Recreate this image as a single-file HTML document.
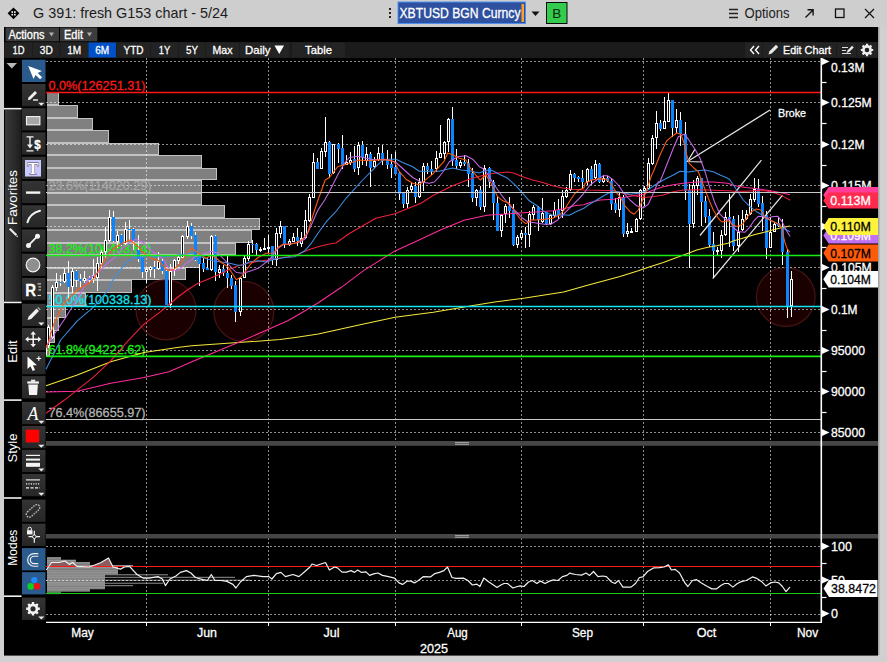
<!DOCTYPE html>
<html lang="en"><head><meta charset="utf-8"><title>G 391: fresh G153 chart</title>
<style>html,body{margin:0;padding:0;background:#000;overflow:hidden}svg{display:block}text{font-family:"Liberation Sans",sans-serif;white-space:pre}</style></head>
<body>
<svg width="887" height="662" viewBox="0 0 887 662">
<rect x="0" y="0" width="887" height="662" fill="#000" />
<rect x="0" y="0" width="887" height="27" fill="#cecece" />
<rect x="0" y="27" width="4" height="635" fill="#d0d0d0" />
<rect x="878" y="27" width="9" height="635" fill="#d0d0d0" />
<rect x="878" y="27" width="1.5" height="628" fill="#a4a4a4" />
<rect x="0" y="655.6" width="887" height="6.4" fill="#d0d0d0" />
<path d="M13.5 7.4L19.4 13.3L13.5 19.2L7.6 13.3z" fill="#000"/>
<rect x="11.4" y="11.2" width="1.7" height="1.7" fill="#e8e8e8" />
<rect x="11.4" y="13.8" width="1.7" height="1.7" fill="#e8e8e8" />
<rect x="14.0" y="11.2" width="1.7" height="1.7" fill="#e8e8e8" />
<rect x="14.0" y="13.8" width="1.7" height="1.7" fill="#e8e8e8" />
<text x="33" y="18" font-size="14.5" fill="#1c1c1c" textLength="195" lengthAdjust="spacingAndGlyphs">G 391: fresh G153 chart - 5/24</text>
<g fill="#222"><rect x="389" y="8" width="2" height="2"/><rect x="389" y="12" width="2" height="2"/><rect x="389" y="16" width="2" height="2"/></g>
<rect x="398" y="2" width="127.5" height="21.5" fill="#2f4f9f" stroke="#4d8ff0" stroke-width="1"/>
<text x="399.5" y="18" font-size="14.5" fill="#fff" textLength="121" lengthAdjust="spacingAndGlyphs" stroke="#fff" stroke-width="0.3">XBTUSD BGN Curncy</text>
<rect x="521.5" y="4" width="2.5" height="18" fill="#ffa020" />
<path d="M531.5 11.5h8l-4 4.5z" fill="#111"/>
<rect x="546.5" y="2.5" width="20.5" height="21" fill="#33cc4d" stroke="#0a0a0a" stroke-width="1"/>
<text x="556.7" y="18" font-size="13.5" fill="#0a2a10" text-anchor="middle">B</text>
<g stroke="#222" stroke-width="1.3"><path d="M729 9.5h9M729 13.5h9M729 17.5h9"/></g>
<text x="744.5" y="18" font-size="14.5" fill="#1c1c1c" textLength="45" lengthAdjust="spacingAndGlyphs">Options</text>
<path d="M805.5 17.5l7-7M807.5 9.8h5.6v5.6" stroke="#111" stroke-width="1.4" fill="none"/>
<rect x="835.5" y="9" width="8.5" height="8.5" stroke="#111" stroke-width="1.3" fill="none"/>
<path d="M865 9l9 9M874 9l-9 9" stroke="#111" stroke-width="1.2" fill="none"/>
<rect x="5.5" y="27.5" width="53.5" height="13.8" fill="#3c3c3c" />
<rect x="60" y="27.5" width="37.3" height="13.8" fill="#3c3c3c" />
<text x="8.5" y="38.5" font-size="12" fill="#fff" textLength="36" lengthAdjust="spacingAndGlyphs" stroke="#fff" stroke-width="0.3">Actions</text>
<path d="M49 32.5h5l-2.5 4z" fill="#b0b0b0"/>
<text x="64" y="38.5" font-size="12" fill="#fff" textLength="19" lengthAdjust="spacingAndGlyphs" stroke="#fff" stroke-width="0.3">Edit</text>
<path d="M87 32.5h5l-2.5 4z" fill="#b0b0b0"/>
<rect x="4" y="42" width="874" height="16" fill="#1b1b1b" />
<rect x="5" y="42.5" width="27" height="15" fill="#232323" />
<text x="18.5" y="54" font-size="11.5" fill="#fff" text-anchor="middle" textLength="12" lengthAdjust="spacingAndGlyphs" stroke="#fff" stroke-width="0.3">1D</text>
<rect x="33" y="42.5" width="26.5" height="15" fill="#232323" />
<text x="46.25" y="54" font-size="11.5" fill="#fff" text-anchor="middle" textLength="13" lengthAdjust="spacingAndGlyphs" stroke="#fff" stroke-width="0.3">3D</text>
<rect x="60.5" y="42.5" width="27.5" height="15" fill="#232323" />
<text x="74.25" y="54" font-size="11.5" fill="#fff" text-anchor="middle" textLength="14" lengthAdjust="spacingAndGlyphs" stroke="#fff" stroke-width="0.3">1M</text>
<rect x="88.5" y="42.5" width="27.5" height="15" fill="#0050c8" />
<text x="102.25" y="54" font-size="11.5" fill="#fff" text-anchor="middle" textLength="14" lengthAdjust="spacingAndGlyphs" stroke="#fff" stroke-width="0.3">6M</text>
<rect x="117" y="42.5" width="33" height="15" fill="#232323" />
<text x="133.5" y="54" font-size="11.5" fill="#fff" text-anchor="middle" textLength="20" lengthAdjust="spacingAndGlyphs" stroke="#fff" stroke-width="0.3">YTD</text>
<rect x="151" y="42.5" width="27" height="15" fill="#232323" />
<text x="164.5" y="54" font-size="11.5" fill="#fff" text-anchor="middle" textLength="11.5" lengthAdjust="spacingAndGlyphs" stroke="#fff" stroke-width="0.3">1Y</text>
<rect x="179" y="42.5" width="26" height="15" fill="#232323" />
<text x="192.0" y="54" font-size="11.5" fill="#fff" text-anchor="middle" textLength="12" lengthAdjust="spacingAndGlyphs" stroke="#fff" stroke-width="0.3">5Y</text>
<rect x="206" y="42.5" width="33" height="15" fill="#232323" />
<text x="222.5" y="54" font-size="11.5" fill="#fff" text-anchor="middle" textLength="20" lengthAdjust="spacingAndGlyphs" stroke="#fff" stroke-width="0.3">Max</text>
<rect x="240" y="42.5" width="49.5" height="15" fill="#232323" />
<text x="245" y="54" font-size="11.5" fill="#fff" textLength="25.5" lengthAdjust="spacingAndGlyphs" stroke="#fff" stroke-width="0.3">Daily</text>
<path d="M274.5 45.5h9.5l-4.75 8.5z" fill="#fff"/>
<rect x="292" y="42.5" width="53" height="15" fill="#232323" />
<text x="318.5" y="54" font-size="11.5" fill="#fff" text-anchor="middle" textLength="27" lengthAdjust="spacingAndGlyphs" stroke="#fff" stroke-width="0.3">Table</text>
<rect x="745" y="42.5" width="17" height="15" fill="#232323" />
<rect x="763" y="42.5" width="73" height="15" fill="#232323" />
<rect x="837" y="42.5" width="19" height="15" fill="#232323" />
<rect x="857" y="42.5" width="20" height="15" fill="#232323" />
<path d="M754 46l-3.5 4 3.5 4M759 46l-3.5 4 3.5 4" stroke="#fff" stroke-width="1.4" fill="none"/>
<path d="M768.5 54.5l1-3.2 6.5-6.5 2.2 2.2-6.5 6.5z" fill="#e8e8e8"/>
<text x="783" y="54" font-size="11.5" fill="#fff" textLength="48" lengthAdjust="spacingAndGlyphs" stroke="#fff" stroke-width="0.3">Edit Chart</text>
<g stroke="#ddd" stroke-width="1" fill="none"><path d="M842 47.5h6M842 50.5h4M842 53.5h9"/></g><path d="M846.5 53l1-2.6 4.6-4.6 1.6 1.6-4.6 4.6z" fill="#eee"/>
<g transform="translate(867,50)"><circle r="3.6" fill="none" stroke="#eee" stroke-width="2.6"/><g stroke="#eee" stroke-width="2.2"><path d="M0-6.2V-4M0 6.2V4M-6.2 0H-4M6.2 0H4M-4.4-4.4L-2.9-2.9M4.4 4.4L2.9 2.9M-4.4 4.4L-2.9 2.9M4.4-4.4L2.9-2.9"/></g></g>
<g id="volprofile">
<rect x="47" y="92" width="12" height="13" fill="#c2c2c2" />
<rect x="47" y="93" width="11" height="11" fill="#808080" />
<rect x="47" y="105" width="31" height="13" fill="#c2c2c2" />
<rect x="47" y="106" width="30" height="11" fill="#808080" />
<rect x="47" y="118" width="46" height="12" fill="#c2c2c2" />
<rect x="47" y="119" width="45" height="10" fill="#808080" />
<rect x="47" y="130" width="62" height="13" fill="#c2c2c2" />
<rect x="47" y="131" width="61" height="11" fill="#808080" />
<rect x="47" y="143" width="112" height="12" fill="#c2c2c2" />
<rect x="47" y="144" width="111" height="10" fill="#808080" />
<rect x="47" y="155" width="155" height="13" fill="#c2c2c2" />
<rect x="47" y="156" width="154" height="11" fill="#808080" />
<rect x="47" y="168" width="170" height="12" fill="#c2c2c2" />
<rect x="47" y="169" width="169" height="10" fill="#808080" />
<rect x="47" y="180" width="155" height="13" fill="#c2c2c2" />
<rect x="47" y="181" width="154" height="11" fill="#808080" />
<rect x="47" y="193" width="155" height="12" fill="#c2c2c2" />
<rect x="47" y="194" width="154" height="10" fill="#808080" />
<rect x="47" y="205" width="178" height="13" fill="#c2c2c2" />
<rect x="47" y="206" width="177" height="11" fill="#808080" />
<rect x="47" y="218" width="213" height="12" fill="#c2c2c2" />
<rect x="47" y="219" width="212" height="10" fill="#808080" />
<rect x="47" y="230" width="205" height="13" fill="#c2c2c2" />
<rect x="47" y="231" width="204" height="11" fill="#808080" />
<rect x="47" y="243" width="189" height="12" fill="#c2c2c2" />
<rect x="47" y="244" width="188" height="10" fill="#808080" />
<rect x="47" y="255" width="153" height="13" fill="#c2c2c2" />
<rect x="47" y="256" width="152" height="11" fill="#808080" />
<rect x="47" y="268" width="139" height="12" fill="#c2c2c2" />
<rect x="47" y="269" width="138" height="10" fill="#808080" />
<rect x="47" y="280" width="85" height="13" fill="#c2c2c2" />
<rect x="47" y="281" width="84" height="11" fill="#808080" />
<rect x="47" y="293" width="39" height="13" fill="#c2c2c2" />
<rect x="47" y="294" width="38" height="11" fill="#808080" />
<rect x="47" y="306" width="19" height="12" fill="#c2c2c2" />
<rect x="47" y="307" width="18" height="10" fill="#808080" />
<rect x="47" y="318" width="12" height="13" fill="#c2c2c2" />
<rect x="47" y="319" width="11" height="11" fill="#808080" />
<rect x="47" y="331" width="8" height="12" fill="#c2c2c2" />
<rect x="47" y="332" width="7" height="10" fill="#808080" />
<rect x="47" y="343" width="3" height="13" fill="#c2c2c2" />
<rect x="47" y="344" width="2" height="11" fill="#808080" />
</g>
<g fill="#1c0000" fill-opacity="0.92" stroke="#471414" stroke-width="1.2"><circle cx="166" cy="309.8" r="30"/><circle cx="243.8" cy="311.5" r="30"/><circle cx="785.8" cy="297" r="29.3"/></g>
<g id="grid" stroke="#fff" stroke-opacity="0.55" stroke-width="1" stroke-dasharray="2 2" shape-rendering="crispEdges">
<path d="M46 432.5H821"/>
<path d="M46 391.5H821"/>
<path d="M46 350.5H821"/>
<path d="M46 309.5H821"/>
<path d="M46 267.5H821"/>
<path d="M46 226.5H821"/>
<path d="M46 185.5H821"/>
<path d="M46 144.5H821"/>
<path d="M46 102.5H821"/>
<path d="M46 61.5H821"/>
<path d="M46 546.5H821"/>
<path d="M46 580.5H821"/>
<path d="M46 614.5H821"/>
<path d="M146.5 58V622"/>
<path d="M268.5 58V622"/>
<path d="M395.5 58V622"/>
<path d="M521.5 58V622"/>
<path d="M643.5 58V622"/>
<path d="M770.5 58V622"/>
</g>
<text x="48.5" y="89.9" font-size="13" fill="#ff1818" textLength="97" lengthAdjust="spacingAndGlyphs" stroke="#ff1818" stroke-width="0.3">0.0%(126251.31)</text>
<text x="48.5" y="189.9" font-size="13" fill="#a6a6a6" textLength="103" lengthAdjust="spacingAndGlyphs" stroke="#a6a6a6" stroke-width="0.3">23.6%(114020.29)</text>
<text x="48.5" y="252.9" font-size="13" fill="#14f014" textLength="103" lengthAdjust="spacingAndGlyphs" stroke="#14f014" stroke-width="0.3">38.2%(106453.64)</text>
<text x="48.5" y="303.9" font-size="13" fill="#10e4f0" textLength="103" lengthAdjust="spacingAndGlyphs" stroke="#10e4f0" stroke-width="0.3">50.0%(100338.13)</text>
<text x="48.5" y="353.7" font-size="13" fill="#14f014" textLength="97" lengthAdjust="spacingAndGlyphs" stroke="#14f014" stroke-width="0.3">61.8%(94222.62)</text>
<text x="48.5" y="416.9" font-size="13" fill="#b4b4b4" textLength="97" lengthAdjust="spacingAndGlyphs" stroke="#b4b4b4" stroke-width="0.3">76.4%(86655.97)</text>
<g id="candles" shape-rendering="crispEdges">
<path d="M48.5 325V327M48.5 346V348" stroke="#fff" stroke-width="1"/>
<rect x="47.5" y="327.5" width="2" height="18" fill="#000" stroke="#fff" stroke-width="1"/>
<path d="M52.5 285V287M52.5 338V339" stroke="#fff" stroke-width="1"/>
<rect x="51.5" y="287.5" width="2" height="50" fill="#000" stroke="#fff" stroke-width="1"/>
<path d="M56.5 273V282M56.5 288V291" stroke="#fff" stroke-width="1"/>
<rect x="55.5" y="282.5" width="2" height="5" fill="#000" stroke="#fff" stroke-width="1"/>
<path d="M60.5 275V286" stroke="#fff" stroke-width="1"/>
<rect x="59.0" y="282" width="3" height="1" fill="#0a84ff"/>
<path d="M64.5 268V273M64.5 282V283" stroke="#fff" stroke-width="1"/>
<rect x="63.5" y="273.5" width="2" height="8" fill="#000" stroke="#fff" stroke-width="1"/>
<path d="M68.5 261V299" stroke="#fff" stroke-width="1"/>
<rect x="67.0" y="273" width="3" height="14" fill="#0a84ff"/>
<path d="M72.5 268V271M72.5 287V293" stroke="#fff" stroke-width="1"/>
<rect x="71.5" y="271.5" width="2" height="15" fill="#000" stroke="#fff" stroke-width="1"/>
<path d="M76.5 270V287" stroke="#fff" stroke-width="1"/>
<rect x="75.0" y="271" width="3" height="9" fill="#0a84ff"/>
<path d="M80.5 274V288" stroke="#fff" stroke-width="1"/>
<rect x="79.0" y="279" width="3" height="2" fill="#0a84ff"/>
<path d="M84.5 271V278M84.5 281V283" stroke="#fff" stroke-width="1"/>
<rect x="83.5" y="278.5" width="2" height="2" fill="#000" stroke="#fff" stroke-width="1"/>
<path d="M89.5 276V283" stroke="#fff" stroke-width="1"/>
<rect x="88.0" y="278" width="3" height="2" fill="#0a84ff"/>
<path d="M93.5 259V275M93.5 279V283" stroke="#fff" stroke-width="1"/>
<rect x="92.5" y="275.5" width="2" height="3" fill="#000" stroke="#fff" stroke-width="1"/>
<path d="M97.5 257V263M97.5 278V291" stroke="#fff" stroke-width="1"/>
<rect x="96.5" y="263.5" width="2" height="14" fill="#000" stroke="#fff" stroke-width="1"/>
<path d="M101.5 250V252M101.5 264V268" stroke="#fff" stroke-width="1"/>
<rect x="100.5" y="252.5" width="2" height="11" fill="#000" stroke="#fff" stroke-width="1"/>
<path d="M105.5 227V240M105.5 252V259" stroke="#fff" stroke-width="1"/>
<rect x="104.5" y="240.5" width="2" height="11" fill="#000" stroke="#fff" stroke-width="1"/>
<path d="M109.5 210V217M109.5 241V242" stroke="#fff" stroke-width="1"/>
<rect x="108.5" y="217.5" width="2" height="23" fill="#000" stroke="#fff" stroke-width="1"/>
<path d="M113.5 211V242" stroke="#fff" stroke-width="1"/>
<rect x="112.0" y="217" width="3" height="24" fill="#0a84ff"/>
<path d="M117.5 231V235M117.5 242V248" stroke="#fff" stroke-width="1"/>
<rect x="116.5" y="235.5" width="2" height="6" fill="#000" stroke="#fff" stroke-width="1"/>
<path d="M121.5 234V246" stroke="#fff" stroke-width="1"/>
<rect x="120.0" y="235" width="3" height="10" fill="#0a84ff"/>
<path d="M125.5 222V229M125.5 244V245" stroke="#fff" stroke-width="1"/>
<rect x="124.5" y="229.5" width="2" height="14" fill="#000" stroke="#fff" stroke-width="1"/>
<path d="M129.5 220V241" stroke="#fff" stroke-width="1"/>
<rect x="128.0" y="229" width="3" height="1" fill="#0a84ff"/>
<path d="M133.5 228V250" stroke="#fff" stroke-width="1"/>
<rect x="132.0" y="229" width="3" height="12" fill="#0a84ff"/>
<path d="M138.5 235V262" stroke="#fff" stroke-width="1"/>
<rect x="137.0" y="250" width="3" height="9" fill="#0a84ff"/>
<path d="M142.5 256V278" stroke="#fff" stroke-width="1"/>
<rect x="141.0" y="257" width="3" height="15" fill="#0a84ff"/>
<path d="M146.5 267V269M146.5 272V283" stroke="#fff" stroke-width="1"/>
<rect x="145.5" y="269.5" width="2" height="2" fill="#000" stroke="#fff" stroke-width="1"/>
<path d="M150.5 266V267M150.5 270V277" stroke="#fff" stroke-width="1"/>
<rect x="149.5" y="267.5" width="2" height="2" fill="#000" stroke="#fff" stroke-width="1"/>
<path d="M154.5 261V278" stroke="#fff" stroke-width="1"/>
<rect x="153.0" y="267" width="3" height="2" fill="#0a84ff"/>
<path d="M158.5 252V261M158.5 269V270" stroke="#fff" stroke-width="1"/>
<rect x="157.5" y="261.5" width="2" height="7" fill="#000" stroke="#fff" stroke-width="1"/>
<path d="M162.5 258V274" stroke="#fff" stroke-width="1"/>
<rect x="161.0" y="261" width="3" height="10" fill="#0a84ff"/>
<path d="M166.5 270V305" stroke="#fff" stroke-width="1"/>
<rect x="165.0" y="271" width="3" height="34" fill="#0a84ff"/>
<path d="M170.5 264V271M170.5 305V308" stroke="#fff" stroke-width="1"/>
<rect x="169.5" y="271.5" width="2" height="33" fill="#000" stroke="#fff" stroke-width="1"/>
<path d="M174.5 259V260M174.5 270V276" stroke="#fff" stroke-width="1"/>
<rect x="173.5" y="260.5" width="2" height="9" fill="#000" stroke="#fff" stroke-width="1"/>
<path d="M178.5 256V257M178.5 261V264" stroke="#fff" stroke-width="1"/>
<rect x="177.5" y="257.5" width="2" height="3" fill="#000" stroke="#fff" stroke-width="1"/>
<path d="M182.5 235V236M182.5 258V258" stroke="#fff" stroke-width="1"/>
<rect x="181.5" y="236.5" width="2" height="21" fill="#000" stroke="#fff" stroke-width="1"/>
<path d="M187.5 221V226M187.5 237V239" stroke="#fff" stroke-width="1"/>
<rect x="186.5" y="226.5" width="2" height="10" fill="#000" stroke="#fff" stroke-width="1"/>
<path d="M191.5 223V239" stroke="#fff" stroke-width="1"/>
<rect x="190.0" y="226" width="3" height="10" fill="#0a84ff"/>
<path d="M195.5 232V261" stroke="#fff" stroke-width="1"/>
<rect x="194.0" y="235" width="3" height="25" fill="#0a84ff"/>
<path d="M199.5 255V286" stroke="#fff" stroke-width="1"/>
<rect x="198.0" y="256" width="3" height="8" fill="#0a84ff"/>
<path d="M203.5 258V272" stroke="#fff" stroke-width="1"/>
<rect x="202.0" y="263" width="3" height="6" fill="#0a84ff"/>
<path d="M207.5 257V270" stroke="#fff" stroke-width="1"/>
<rect x="206.0" y="268" width="3" height="2" fill="#0a84ff"/>
<path d="M211.5 235V236M211.5 270V271" stroke="#fff" stroke-width="1"/>
<rect x="210.5" y="236.5" width="2" height="33" fill="#000" stroke="#fff" stroke-width="1"/>
<path d="M215.5 235V281" stroke="#fff" stroke-width="1"/>
<rect x="214.0" y="236" width="3" height="36" fill="#0a84ff"/>
<path d="M219.5 265V269M219.5 273V278" stroke="#fff" stroke-width="1"/>
<rect x="218.5" y="269.5" width="2" height="3" fill="#000" stroke="#fff" stroke-width="1"/>
<path d="M223.5 265V276" stroke="#fff" stroke-width="1"/>
<rect x="222.0" y="269" width="3" height="4" fill="#0a84ff"/>
<path d="M227.5 256V288" stroke="#fff" stroke-width="1"/>
<rect x="226.0" y="273" width="3" height="5" fill="#0a84ff"/>
<path d="M231.5 275V289" stroke="#fff" stroke-width="1"/>
<rect x="230.0" y="278" width="3" height="8" fill="#0a84ff"/>
<path d="M235.5 281V322" stroke="#fff" stroke-width="1"/>
<rect x="234.0" y="285" width="3" height="27" fill="#0a84ff"/>
<path d="M240.5 277V278M240.5 312V316" stroke="#fff" stroke-width="1"/>
<rect x="239.5" y="278.5" width="2" height="33" fill="#000" stroke="#fff" stroke-width="1"/>
<path d="M244.5 256V258M244.5 278V278" stroke="#fff" stroke-width="1"/>
<rect x="243.5" y="258.5" width="2" height="19" fill="#000" stroke="#fff" stroke-width="1"/>
<path d="M248.5 241V244M248.5 259V261" stroke="#fff" stroke-width="1"/>
<rect x="247.5" y="244.5" width="2" height="14" fill="#000" stroke="#fff" stroke-width="1"/>
<path d="M252.5 240V253" stroke="#fff" stroke-width="1"/>
<rect x="251.0" y="244" width="3" height="1" fill="#0a84ff"/>
<path d="M256.5 243V255" stroke="#fff" stroke-width="1"/>
<rect x="255.0" y="244" width="3" height="6" fill="#0a84ff"/>
<path d="M260.5 247V249M260.5 250V252" stroke="#fff" stroke-width="1"/>
<rect x="259.5" y="249.5" width="2" height="0.5" fill="#000" stroke="#fff" stroke-width="1"/>
<path d="M264.5 238V248M264.5 250V250" stroke="#fff" stroke-width="1"/>
<rect x="263.5" y="248.5" width="2" height="1" fill="#000" stroke="#fff" stroke-width="1"/>
<path d="M268.5 235V247M268.5 248V253" stroke="#fff" stroke-width="1"/>
<rect x="267.5" y="247.5" width="2" height="0.5" fill="#000" stroke="#fff" stroke-width="1"/>
<path d="M272.5 246V265" stroke="#fff" stroke-width="1"/>
<rect x="271.0" y="246" width="3" height="14" fill="#0a84ff"/>
<path d="M276.5 228V233M276.5 260V266" stroke="#fff" stroke-width="1"/>
<rect x="275.5" y="233.5" width="2" height="26" fill="#000" stroke="#fff" stroke-width="1"/>
<path d="M280.5 221V226M280.5 234V238" stroke="#fff" stroke-width="1"/>
<rect x="279.5" y="226.5" width="2" height="7" fill="#000" stroke="#fff" stroke-width="1"/>
<path d="M284.5 226V248" stroke="#fff" stroke-width="1"/>
<rect x="283.0" y="226" width="3" height="18" fill="#0a84ff"/>
<path d="M289.5 239V241M289.5 245V246" stroke="#fff" stroke-width="1"/>
<rect x="288.5" y="241.5" width="2" height="3" fill="#000" stroke="#fff" stroke-width="1"/>
<path d="M293.5 233V237M293.5 242V242" stroke="#fff" stroke-width="1"/>
<rect x="292.5" y="237.5" width="2" height="4" fill="#000" stroke="#fff" stroke-width="1"/>
<path d="M297.5 228V246" stroke="#fff" stroke-width="1"/>
<rect x="296.0" y="237" width="3" height="4" fill="#0a84ff"/>
<path d="M301.5 232V238M301.5 244V247" stroke="#fff" stroke-width="1"/>
<rect x="300.5" y="238.5" width="2" height="5" fill="#000" stroke="#fff" stroke-width="1"/>
<path d="M305.5 210V220M305.5 238V239" stroke="#fff" stroke-width="1"/>
<rect x="304.5" y="220.5" width="2" height="17" fill="#000" stroke="#fff" stroke-width="1"/>
<path d="M309.5 194V197M309.5 221V222" stroke="#fff" stroke-width="1"/>
<rect x="308.5" y="197.5" width="2" height="23" fill="#000" stroke="#fff" stroke-width="1"/>
<path d="M313.5 153V162M313.5 198V198" stroke="#fff" stroke-width="1"/>
<rect x="312.5" y="162.5" width="2" height="35" fill="#000" stroke="#fff" stroke-width="1"/>
<path d="M317.5 158V169" stroke="#fff" stroke-width="1"/>
<rect x="316.0" y="162" width="3" height="7" fill="#0a84ff"/>
<path d="M321.5 148V151M321.5 169V169" stroke="#fff" stroke-width="1"/>
<rect x="320.5" y="151.5" width="2" height="17" fill="#000" stroke="#fff" stroke-width="1"/>
<path d="M325.5 117V142M325.5 152V157" stroke="#fff" stroke-width="1"/>
<rect x="324.5" y="142.5" width="2" height="9" fill="#000" stroke="#fff" stroke-width="1"/>
<path d="M329.5 141V178" stroke="#fff" stroke-width="1"/>
<rect x="328.0" y="142" width="3" height="32" fill="#0a84ff"/>
<path d="M333.5 144V144M333.5 173V174" stroke="#fff" stroke-width="1"/>
<rect x="332.5" y="144.5" width="2" height="28" fill="#000" stroke="#fff" stroke-width="1"/>
<path d="M338.5 143V163" stroke="#fff" stroke-width="1"/>
<rect x="337.0" y="144" width="3" height="5" fill="#0a84ff"/>
<path d="M342.5 135V169" stroke="#fff" stroke-width="1"/>
<rect x="341.0" y="148" width="3" height="18" fill="#0a84ff"/>
<path d="M346.5 155V162M346.5 165V165" stroke="#fff" stroke-width="1"/>
<rect x="345.5" y="162.5" width="2" height="2" fill="#000" stroke="#fff" stroke-width="1"/>
<path d="M350.5 152V160M350.5 163V165" stroke="#fff" stroke-width="1"/>
<rect x="349.5" y="160.5" width="2" height="2" fill="#000" stroke="#fff" stroke-width="1"/>
<path d="M354.5 146V172" stroke="#fff" stroke-width="1"/>
<rect x="353.0" y="159" width="3" height="10" fill="#0a84ff"/>
<path d="M358.5 142V145M358.5 168V175" stroke="#fff" stroke-width="1"/>
<rect x="357.5" y="145.5" width="2" height="22" fill="#000" stroke="#fff" stroke-width="1"/>
<path d="M362.5 141V165" stroke="#fff" stroke-width="1"/>
<rect x="361.0" y="145" width="3" height="12" fill="#0a84ff"/>
<path d="M366.5 147V154M366.5 161V166" stroke="#fff" stroke-width="1"/>
<rect x="365.5" y="154.5" width="2" height="6" fill="#000" stroke="#fff" stroke-width="1"/>
<path d="M370.5 152V187" stroke="#fff" stroke-width="1"/>
<rect x="369.0" y="154" width="3" height="14" fill="#0a84ff"/>
<path d="M374.5 157V161M374.5 167V168" stroke="#fff" stroke-width="1"/>
<rect x="373.5" y="161.5" width="2" height="5" fill="#000" stroke="#fff" stroke-width="1"/>
<path d="M378.5 147V153M378.5 160V161" stroke="#fff" stroke-width="1"/>
<rect x="377.5" y="153.5" width="2" height="6" fill="#000" stroke="#fff" stroke-width="1"/>
<path d="M382.5 145V165" stroke="#fff" stroke-width="1"/>
<rect x="381.0" y="153" width="3" height="8" fill="#0a84ff"/>
<path d="M387.5 150V169" stroke="#fff" stroke-width="1"/>
<rect x="386.0" y="160" width="3" height="5" fill="#0a84ff"/>
<path d="M391.5 154V178" stroke="#fff" stroke-width="1"/>
<rect x="390.0" y="164" width="3" height="4" fill="#0a84ff"/>
<path d="M395.5 152V174" stroke="#fff" stroke-width="1"/>
<rect x="394.0" y="167" width="3" height="7" fill="#0a84ff"/>
<path d="M399.5 172V200" stroke="#fff" stroke-width="1"/>
<rect x="398.0" y="173" width="3" height="21" fill="#0a84ff"/>
<path d="M403.5 192V208" stroke="#fff" stroke-width="1"/>
<rect x="402.0" y="193" width="3" height="11" fill="#0a84ff"/>
<path d="M407.5 187V190M407.5 204V208" stroke="#fff" stroke-width="1"/>
<rect x="406.5" y="190.5" width="2" height="13" fill="#000" stroke="#fff" stroke-width="1"/>
<path d="M411.5 183V186M411.5 190V192" stroke="#fff" stroke-width="1"/>
<rect x="410.5" y="186.5" width="2" height="3" fill="#000" stroke="#fff" stroke-width="1"/>
<path d="M415.5 182V203" stroke="#fff" stroke-width="1"/>
<rect x="414.0" y="186" width="3" height="11" fill="#0a84ff"/>
<path d="M419.5 178V182M419.5 197V198" stroke="#fff" stroke-width="1"/>
<rect x="418.5" y="182.5" width="2" height="14" fill="#000" stroke="#fff" stroke-width="1"/>
<path d="M423.5 163V166M423.5 183V191" stroke="#fff" stroke-width="1"/>
<rect x="422.5" y="166.5" width="2" height="16" fill="#000" stroke="#fff" stroke-width="1"/>
<path d="M427.5 163V174" stroke="#fff" stroke-width="1"/>
<rect x="426.0" y="166" width="3" height="4" fill="#0a84ff"/>
<path d="M431.5 161V175" stroke="#fff" stroke-width="1"/>
<rect x="430.0" y="169" width="3" height="2" fill="#0a84ff"/>
<path d="M436.5 151V158M436.5 169V172" stroke="#fff" stroke-width="1"/>
<rect x="435.5" y="158.5" width="2" height="10" fill="#000" stroke="#fff" stroke-width="1"/>
<path d="M440.5 125V153M440.5 158V158" stroke="#fff" stroke-width="1"/>
<rect x="439.5" y="153.5" width="2" height="4" fill="#000" stroke="#fff" stroke-width="1"/>
<path d="M444.5 141V142M444.5 154V159" stroke="#fff" stroke-width="1"/>
<rect x="443.5" y="142.5" width="2" height="11" fill="#000" stroke="#fff" stroke-width="1"/>
<path d="M448.5 118V119M448.5 142V152" stroke="#fff" stroke-width="1"/>
<rect x="447.5" y="119.5" width="2" height="22" fill="#000" stroke="#fff" stroke-width="1"/>
<path d="M452.5 107V166" stroke="#fff" stroke-width="1"/>
<rect x="451.0" y="119" width="3" height="42" fill="#0a84ff"/>
<path d="M456.5 149V169" stroke="#fff" stroke-width="1"/>
<rect x="455.0" y="160" width="3" height="6" fill="#0a84ff"/>
<path d="M460.5 160V162M460.5 166V168" stroke="#fff" stroke-width="1"/>
<rect x="459.5" y="162.5" width="2" height="3" fill="#000" stroke="#fff" stroke-width="1"/>
<path d="M464.5 155V166" stroke="#fff" stroke-width="1"/>
<rect x="463.0" y="162" width="3" height="2" fill="#0a84ff"/>
<path d="M468.5 159V187" stroke="#fff" stroke-width="1"/>
<rect x="467.0" y="163" width="3" height="11" fill="#0a84ff"/>
<path d="M472.5 168V202" stroke="#fff" stroke-width="1"/>
<rect x="471.0" y="173" width="3" height="25" fill="#0a84ff"/>
<path d="M476.5 189V190M476.5 198V206" stroke="#fff" stroke-width="1"/>
<rect x="475.5" y="190.5" width="2" height="7" fill="#000" stroke="#fff" stroke-width="1"/>
<path d="M480.5 186V210" stroke="#fff" stroke-width="1"/>
<rect x="479.0" y="190" width="3" height="17" fill="#0a84ff"/>
<path d="M484.5 165V168M484.5 207V212" stroke="#fff" stroke-width="1"/>
<rect x="483.5" y="168.5" width="2" height="38" fill="#000" stroke="#fff" stroke-width="1"/>
<path d="M489.5 167V188" stroke="#fff" stroke-width="1"/>
<rect x="488.0" y="168" width="3" height="14" fill="#0a84ff"/>
<path d="M493.5 180V220" stroke="#fff" stroke-width="1"/>
<rect x="492.0" y="182" width="3" height="21" fill="#0a84ff"/>
<path d="M497.5 196V231" stroke="#fff" stroke-width="1"/>
<rect x="496.0" y="203" width="3" height="28" fill="#0a84ff"/>
<path d="M501.5 214V215M501.5 231V237" stroke="#fff" stroke-width="1"/>
<rect x="500.5" y="215.5" width="2" height="15" fill="#000" stroke="#fff" stroke-width="1"/>
<path d="M505.5 204V206M505.5 214V223" stroke="#fff" stroke-width="1"/>
<rect x="504.5" y="206.5" width="2" height="7" fill="#000" stroke="#fff" stroke-width="1"/>
<path d="M509.5 197V218" stroke="#fff" stroke-width="1"/>
<rect x="508.0" y="206" width="3" height="5" fill="#0a84ff"/>
<path d="M513.5 204V246" stroke="#fff" stroke-width="1"/>
<rect x="512.0" y="210" width="3" height="35" fill="#0a84ff"/>
<path d="M517.5 235V237M517.5 245V248" stroke="#fff" stroke-width="1"/>
<rect x="516.5" y="237.5" width="2" height="7" fill="#000" stroke="#fff" stroke-width="1"/>
<path d="M521.5 230V233M521.5 238V240" stroke="#fff" stroke-width="1"/>
<rect x="520.5" y="233.5" width="2" height="4" fill="#000" stroke="#fff" stroke-width="1"/>
<path d="M525.5 227V248" stroke="#fff" stroke-width="1"/>
<rect x="524.0" y="233" width="3" height="2" fill="#0a84ff"/>
<path d="M529.5 211V214M529.5 235V247" stroke="#fff" stroke-width="1"/>
<rect x="528.5" y="214.5" width="2" height="20" fill="#000" stroke="#fff" stroke-width="1"/>
<path d="M533.5 205V207M533.5 215V220" stroke="#fff" stroke-width="1"/>
<rect x="532.5" y="207.5" width="2" height="7" fill="#000" stroke="#fff" stroke-width="1"/>
<path d="M538.5 206V231" stroke="#fff" stroke-width="1"/>
<rect x="537.0" y="207" width="3" height="13" fill="#0a84ff"/>
<path d="M542.5 198V213M542.5 222V223" stroke="#fff" stroke-width="1"/>
<rect x="541.5" y="213.5" width="2" height="8" fill="#000" stroke="#fff" stroke-width="1"/>
<path d="M546.5 212V225" stroke="#fff" stroke-width="1"/>
<rect x="545.0" y="212" width="3" height="12" fill="#0a84ff"/>
<path d="M550.5 214V215M550.5 224V225" stroke="#fff" stroke-width="1"/>
<rect x="549.5" y="215.5" width="2" height="8" fill="#000" stroke="#fff" stroke-width="1"/>
<path d="M554.5 202V210M554.5 216V218" stroke="#fff" stroke-width="1"/>
<rect x="553.5" y="210.5" width="2" height="5" fill="#000" stroke="#fff" stroke-width="1"/>
<path d="M558.5 199V219" stroke="#fff" stroke-width="1"/>
<rect x="557.0" y="210" width="3" height="5" fill="#0a84ff"/>
<path d="M562.5 190V196M562.5 211V218" stroke="#fff" stroke-width="1"/>
<rect x="561.5" y="196.5" width="2" height="14" fill="#000" stroke="#fff" stroke-width="1"/>
<path d="M566.5 187V190M566.5 197V198" stroke="#fff" stroke-width="1"/>
<rect x="565.5" y="190.5" width="2" height="6" fill="#000" stroke="#fff" stroke-width="1"/>
<path d="M570.5 170V174M570.5 190V191" stroke="#fff" stroke-width="1"/>
<rect x="569.5" y="174.5" width="2" height="15" fill="#000" stroke="#fff" stroke-width="1"/>
<path d="M574.5 173V182" stroke="#fff" stroke-width="1"/>
<rect x="573.0" y="174" width="3" height="4" fill="#0a84ff"/>
<path d="M578.5 176V182" stroke="#fff" stroke-width="1"/>
<rect x="577.0" y="177" width="3" height="2" fill="#0a84ff"/>
<path d="M582.5 170V188" stroke="#fff" stroke-width="1"/>
<rect x="581.0" y="178" width="3" height="4" fill="#0a84ff"/>
<path d="M587.5 168V169M587.5 182V185" stroke="#fff" stroke-width="1"/>
<rect x="586.5" y="169.5" width="2" height="12" fill="#000" stroke="#fff" stroke-width="1"/>
<path d="M591.5 166V185" stroke="#fff" stroke-width="1"/>
<rect x="590.0" y="169" width="3" height="11" fill="#0a84ff"/>
<path d="M595.5 160V164M595.5 178V179" stroke="#fff" stroke-width="1"/>
<rect x="594.5" y="164.5" width="2" height="13" fill="#000" stroke="#fff" stroke-width="1"/>
<path d="M599.5 163V183" stroke="#fff" stroke-width="1"/>
<rect x="598.0" y="164" width="3" height="18" fill="#0a84ff"/>
<path d="M603.5 175V178M603.5 182V183" stroke="#fff" stroke-width="1"/>
<rect x="602.5" y="178.5" width="2" height="3" fill="#000" stroke="#fff" stroke-width="1"/>
<path d="M607.5 176V182" stroke="#fff" stroke-width="1"/>
<rect x="606.0" y="178" width="3" height="3" fill="#0a84ff"/>
<path d="M611.5 179V210" stroke="#fff" stroke-width="1"/>
<rect x="610.0" y="181" width="3" height="23" fill="#0a84ff"/>
<path d="M615.5 198V213" stroke="#fff" stroke-width="1"/>
<rect x="614.0" y="203" width="3" height="7" fill="#0a84ff"/>
<path d="M619.5 192V197M619.5 210V217" stroke="#fff" stroke-width="1"/>
<rect x="618.5" y="197.5" width="2" height="12" fill="#000" stroke="#fff" stroke-width="1"/>
<path d="M623.5 195V237" stroke="#fff" stroke-width="1"/>
<rect x="622.0" y="197" width="3" height="37" fill="#0a84ff"/>
<path d="M627.5 223V231M627.5 234V237" stroke="#fff" stroke-width="1"/>
<rect x="626.5" y="231.5" width="2" height="2" fill="#000" stroke="#fff" stroke-width="1"/>
<path d="M631.5 228V231M631.5 232V233" stroke="#fff" stroke-width="1"/>
<rect x="630.5" y="231.5" width="2" height="0.5" fill="#000" stroke="#fff" stroke-width="1"/>
<path d="M636.5 218V219M636.5 232V232" stroke="#fff" stroke-width="1"/>
<rect x="635.5" y="219.5" width="2" height="12" fill="#000" stroke="#fff" stroke-width="1"/>
<path d="M640.5 189V190M640.5 219V220" stroke="#fff" stroke-width="1"/>
<rect x="639.5" y="190.5" width="2" height="28" fill="#000" stroke="#fff" stroke-width="1"/>
<path d="M644.5 186V188M644.5 191V206" stroke="#fff" stroke-width="1"/>
<rect x="643.5" y="188.5" width="2" height="2" fill="#000" stroke="#fff" stroke-width="1"/>
<path d="M648.5 158V163M648.5 189V190" stroke="#fff" stroke-width="1"/>
<rect x="647.5" y="163.5" width="2" height="25" fill="#000" stroke="#fff" stroke-width="1"/>
<path d="M652.5 135V138M652.5 164V165" stroke="#fff" stroke-width="1"/>
<rect x="651.5" y="138.5" width="2" height="25" fill="#000" stroke="#fff" stroke-width="1"/>
<path d="M656.5 111V123M656.5 138V149" stroke="#fff" stroke-width="1"/>
<rect x="655.5" y="123.5" width="2" height="14" fill="#000" stroke="#fff" stroke-width="1"/>
<path d="M660.5 120V131" stroke="#fff" stroke-width="1"/>
<rect x="659.0" y="123" width="3" height="6" fill="#0a84ff"/>
<path d="M664.5 97V121M664.5 129V129" stroke="#fff" stroke-width="1"/>
<rect x="663.5" y="121.5" width="2" height="7" fill="#000" stroke="#fff" stroke-width="1"/>
<path d="M668.5 93V100M668.5 122V122" stroke="#fff" stroke-width="1"/>
<rect x="667.5" y="100.5" width="2" height="21" fill="#000" stroke="#fff" stroke-width="1"/>
<path d="M672.5 100V137" stroke="#fff" stroke-width="1"/>
<rect x="671.0" y="100" width="3" height="28" fill="#0a84ff"/>
<path d="M676.5 109V120M676.5 128V133" stroke="#fff" stroke-width="1"/>
<rect x="675.5" y="120.5" width="2" height="7" fill="#000" stroke="#fff" stroke-width="1"/>
<path d="M680.5 112V146" stroke="#fff" stroke-width="1"/>
<rect x="679.0" y="120" width="3" height="14" fill="#0a84ff"/>
<path d="M685.5 122V200" stroke="#fff" stroke-width="1"/>
<rect x="684.0" y="134" width="3" height="57" fill="#0a84ff"/>
<path d="M689.5 184V268" stroke="#fff" stroke-width="1"/>
<rect x="688.0" y="190" width="3" height="34" fill="#0a84ff"/>
<path d="M693.5 180V185M693.5 224V228" stroke="#fff" stroke-width="1"/>
<rect x="692.5" y="185.5" width="2" height="38" fill="#000" stroke="#fff" stroke-width="1"/>
<path d="M697.5 176V178M697.5 186V195" stroke="#fff" stroke-width="1"/>
<rect x="696.5" y="178.5" width="2" height="7" fill="#000" stroke="#fff" stroke-width="1"/>
<path d="M701.5 178V226" stroke="#fff" stroke-width="1"/>
<rect x="700.0" y="178" width="3" height="24" fill="#0a84ff"/>
<path d="M705.5 196V223" stroke="#fff" stroke-width="1"/>
<rect x="704.0" y="201" width="3" height="16" fill="#0a84ff"/>
<path d="M709.5 209V247" stroke="#fff" stroke-width="1"/>
<rect x="708.0" y="216" width="3" height="29" fill="#0a84ff"/>
<path d="M713.5 232V278" stroke="#fff" stroke-width="1"/>
<rect x="712.0" y="244" width="3" height="7" fill="#0a84ff"/>
<path d="M717.5 247V250M717.5 251V255" stroke="#fff" stroke-width="1"/>
<rect x="716.5" y="250.5" width="2" height="0.5" fill="#000" stroke="#fff" stroke-width="1"/>
<path d="M721.5 230V235M721.5 251V258" stroke="#fff" stroke-width="1"/>
<rect x="720.5" y="235.5" width="2" height="15" fill="#000" stroke="#fff" stroke-width="1"/>
<path d="M725.5 212V217M725.5 235V236" stroke="#fff" stroke-width="1"/>
<rect x="724.5" y="217.5" width="2" height="17" fill="#000" stroke="#fff" stroke-width="1"/>
<path d="M729.5 194V247" stroke="#fff" stroke-width="1"/>
<rect x="728.0" y="217" width="3" height="2" fill="#0a84ff"/>
<path d="M733.5 216V251" stroke="#fff" stroke-width="1"/>
<rect x="732.0" y="219" width="3" height="27" fill="#0a84ff"/>
<path d="M738.5 215V232M738.5 246V252" stroke="#fff" stroke-width="1"/>
<rect x="737.5" y="232.5" width="2" height="13" fill="#000" stroke="#fff" stroke-width="1"/>
<path d="M742.5 210V219M742.5 230V231" stroke="#fff" stroke-width="1"/>
<rect x="741.5" y="219.5" width="2" height="10" fill="#000" stroke="#fff" stroke-width="1"/>
<path d="M746.5 210V214M746.5 219V220" stroke="#fff" stroke-width="1"/>
<rect x="745.5" y="214.5" width="2" height="4" fill="#000" stroke="#fff" stroke-width="1"/>
<path d="M750.5 194V199M750.5 214V215" stroke="#fff" stroke-width="1"/>
<rect x="749.5" y="199.5" width="2" height="14" fill="#000" stroke="#fff" stroke-width="1"/>
<path d="M754.5 178V189M754.5 200V202" stroke="#fff" stroke-width="1"/>
<rect x="753.5" y="189.5" width="2" height="10" fill="#000" stroke="#fff" stroke-width="1"/>
<path d="M758.5 179V207" stroke="#fff" stroke-width="1"/>
<rect x="757.0" y="189" width="3" height="15" fill="#0a84ff"/>
<path d="M762.5 196V231" stroke="#fff" stroke-width="1"/>
<rect x="761.0" y="203" width="3" height="13" fill="#0a84ff"/>
<path d="M766.5 211V259" stroke="#fff" stroke-width="1"/>
<rect x="765.0" y="215" width="3" height="33" fill="#0a84ff"/>
<path d="M770.5 217V232M770.5 248V248" stroke="#fff" stroke-width="1"/>
<rect x="769.5" y="232.5" width="2" height="15" fill="#000" stroke="#fff" stroke-width="1"/>
<path d="M774.5 222V224M774.5 232V232" stroke="#fff" stroke-width="1"/>
<rect x="773.5" y="224.5" width="2" height="7" fill="#000" stroke="#fff" stroke-width="1"/>
<path d="M778.5 217V227" stroke="#fff" stroke-width="1"/>
<rect x="777.0" y="223" width="3" height="3" fill="#0a84ff"/>
<path d="M782.5 219V265" stroke="#fff" stroke-width="1"/>
<rect x="781.0" y="227" width="3" height="25" fill="#0a84ff"/>
<path d="M787.5 249V318" stroke="#fff" stroke-width="1"/>
<rect x="786.0" y="252" width="3" height="54" fill="#0a84ff"/>
<path d="M791.5 271V279M791.5 306V317" stroke="#fff" stroke-width="1"/>
<rect x="790.5" y="279.5" width="2" height="26" fill="#000" stroke="#fff" stroke-width="1"/>
<path d="M46.5 346V356" stroke="#fff" stroke-width="1"/>
</g>
<g stroke="#e8e8e8" stroke-width="1.2" fill="none"><path d="M687.5 161.5L770 110"/><path d="M695 149.2L687.5 161.5L702.5 162"/><path d="M700 235.5L761.4 160.2"/><path d="M712.8 278.5L782.6 195.2"/></g>
<g fill="none" stroke-width="1.05" stroke-linejoin="round">
<path d="M46.0 385.8L77.3 375.0L110.7 361.7L144.0 352.5L177.3 347.5L191.8 345.8L280.0 339.6L295.3 337.5L318.3 334.1L356.7 325.6L395.0 317.2L433.3 312.2L471.6 305.7L494.6 301.9L525.3 298.1L563.6 291.9L586.6 285.4L620.0 276.6L638.3 270.8L650.0 266.7L663.3 262.5L676.7 257.5L688.3 253.3L696.7 250.0L706.7 247.5L716.7 245.8L727.8 243.3L734.7 240.6L746.0 237.2L755.0 234.4L765.2 232.1L775.4 229.3L782.2 227.6L790.1 225.9" stroke="#f4e83c"/>
<path d="M46.0 392.0L77.3 391.2L110.7 383.3L144.0 377.5L169.0 371.7L191.8 361.7L240.0 341.7L287.8 320.8L299.2 314.2L318.3 302.7L341.3 287.3L364.3 270.1L395.0 250.9L418.0 240.6L441.0 229.8L464.0 220.2L487.0 215.3L510.0 213.7L519.3 213.0L536.0 212.0L552.7 210.8L566.0 208.3L574.3 205.8L583.8 204.7L590.0 202.5L600.0 200.0L613.3 199.2L623.3 197.5L633.3 195.8L643.3 194.2L653.3 190.0L663.3 186.7L673.3 184.7L683.3 183.3L696.7 182.0L713.3 182.0L727.8 183.3L734.7 185.7L746.0 187.4L757.3 188.8L768.6 190.4L780.0 192.5L790.1 194.7" stroke="#ff2c9c"/>
<path d="M46.0 413.3L64.8 399.8L94.0 376.7L110.7 360.8L127.3 341.7L144.0 324.2L160.7 311.7L177.3 297.5L187.3 290.0L198.0 283.3L208.0 279.2L218.0 275.0L228.0 270.0L238.0 265.8L248.0 263.3L258.0 261.3L268.0 260.0L278.0 258.3L288.0 256.7L298.0 254.2L308.0 250.0L318.0 246.7L328.0 244.2L335.8 243.0L349.0 233.7L375.8 218.3L395.0 213.7L404.3 210.0L421.0 203.3L432.7 195.8L443.8 190.0L452.7 185.8L461.0 182.5L469.3 179.2L477.7 176.7L486.0 174.7L494.3 173.3L502.7 172.5L507.7 172.0L514.3 173.3L522.7 176.7L532.7 180.0L542.7 182.5L552.7 185.8L562.7 188.0L572.7 189.2L583.8 190.0L596.7 190.3L613.3 190.8L630.0 195.0L643.3 197.5L653.3 196.7L663.3 195.0L673.3 191.7L683.3 190.0L696.7 189.7L706.7 190.0L727.8 190.8L734.7 191.3L746.0 191.3L757.3 190.4L765.2 190.8L773.2 192.5L780.0 194.7L785.6 197.6L790.1 200.2" stroke="#f0203c"/>
<path d="M46.0 369.2L60.7 340.0L77.3 320.8L94.0 306.7L108.2 290.0L110.7 283.3L119.0 271.7L127.3 261.7L134.0 257.5L144.0 256.7L154.0 256.7L164.0 256.7L174.0 255.8L182.3 254.2L191.8 253.3L196.3 255.0L204.7 258.3L213.0 260.8L221.3 262.0L229.7 263.3L238.0 265.3L243.0 265.0L249.7 261.7L258.0 260.8L266.3 262.0L274.7 259.2L284.7 257.5L294.7 256.7L304.7 250.8L311.3 243.3L318.0 233.3L326.3 221.7L335.8 211.7L346.0 198.3L362.7 180.0L376.0 166.7L382.7 160.0L389.3 159.2L396.0 159.2L402.7 162.5L412.7 166.7L419.3 171.3L429.3 171.3L439.3 171.2L443.8 170.0L452.7 168.0L461.0 170.0L469.3 170.8L479.3 173.0L486.0 170.3L491.0 170.0L499.3 174.2L507.7 178.3L516.0 185.8L522.7 193.3L529.3 200.8L536.0 205.0L544.3 211.7L552.7 215.3L562.7 214.7L569.3 215.3L576.0 211.7L583.8 208.3L588.3 205.0L596.7 200.0L605.0 195.0L613.3 190.8L621.7 192.5L630.0 194.2L638.3 193.3L646.7 190.8L655.0 185.0L663.3 180.0L673.3 175.0L680.0 171.3L688.3 172.0L696.7 170.8L705.0 170.0L713.3 171.7L720.0 175.0L727.8 178.3L730.0 180.0L736.7 190.0L743.3 200.0L750.0 206.7L756.7 211.7L763.3 215.8L770.0 220.0L776.7 223.3L783.3 228.3L790.0 231.7" stroke="#3a8ee6"/>
<path d="M46.0 347.5L47.0 345.0L65.7 317.5L82.3 290.0L89.0 278.3L94.0 275.8L99.0 271.7L107.3 263.3L115.7 256.7L122.3 248.3L130.7 241.7L135.7 239.2L142.3 241.7L147.3 246.7L152.3 251.7L159.0 255.0L164.0 260.0L167.3 266.7L172.3 270.8L179.0 270.0L185.7 263.3L191.8 260.0L194.7 256.7L203.0 254.2L211.3 251.3L218.0 253.3L224.7 260.0L231.3 267.5L236.3 272.5L243.0 273.3L251.3 270.8L258.0 268.3L264.7 263.3L271.3 257.5L278.0 248.3L283.0 244.7L291.3 243.7L298.0 242.5L304.7 239.2L311.3 225.0L318.0 210.0L324.7 200.0L329.3 191.7L337.7 175.0L344.3 163.3L349.3 157.5L357.7 156.3L366.0 158.3L374.3 159.7L386.0 159.2L396.0 162.5L404.3 170.0L412.7 177.5L421.0 182.0L429.3 183.3L434.3 182.0L439.3 176.7L443.8 170.8L449.3 161.7L457.7 156.7L466.0 155.8L472.7 159.2L479.3 166.7L484.3 169.2L489.3 176.7L494.3 185.0L502.7 196.7L509.3 205.0L516.0 211.7L522.7 218.3L527.7 221.7L536.0 223.0L544.3 224.2L551.0 224.2L557.7 220.0L564.3 213.3L569.3 208.3L574.3 203.3L579.3 198.3L583.8 193.3L590.0 185.0L596.7 180.0L603.3 175.8L607.5 175.8L613.3 180.0L618.3 185.0L623.3 192.5L630.0 200.0L636.7 205.8L643.3 208.0L648.3 204.2L653.3 193.3L658.3 181.7L660.0 181.7L666.7 165.0L673.3 148.3L678.3 136.7L684.2 134.2L688.3 139.2L695.0 149.2L700.0 158.3L705.0 171.7L710.0 188.3L715.0 203.3L720.0 214.2L725.0 219.2L727.8 220.0L729.0 218.5L733.5 227.6L738.0 231.5L744.8 232.3L749.4 227.6L753.9 220.8L758.4 216.2L763.0 216.8L767.5 218.5L772.0 216.8L777.7 216.2L782.2 221.9L786.7 231.0L790.1 236.6" stroke="#c868e8"/>
<path d="M46.0 348.3L47.0 346.7L54.0 323.3L64.0 303.3L77.3 290.0L82.3 286.7L89.0 283.3L94.0 278.3L100.7 266.7L107.3 255.0L114.0 248.3L122.3 243.3L129.8 240.0L137.3 245.8L144.0 253.3L150.7 258.3L159.0 260.8L164.0 266.7L168.2 270.8L174.0 269.2L180.7 263.3L185.7 255.0L191.8 247.5L198.0 253.3L206.3 258.3L211.3 255.0L215.5 257.5L221.3 262.5L228.0 266.7L232.2 273.3L236.3 279.7L241.3 276.7L246.3 270.0L251.3 263.3L258.0 257.5L266.3 253.3L273.0 253.0L278.0 247.5L283.0 244.2L289.7 244.2L296.3 243.0L303.0 238.7L308.0 231.7L313.0 215.0L318.0 200.0L321.0 191.7L325.2 180.0L329.3 177.5L337.7 166.7L346.0 164.2L354.3 161.7L358.5 160.0L367.7 160.8L376.0 160.0L386.8 159.7L394.3 161.7L399.3 171.7L406.0 179.2L412.7 183.3L419.3 184.7L424.3 180.8L432.7 174.2L439.3 166.7L443.8 161.7L447.7 153.0L452.7 154.7L459.3 158.3L466.0 160.0L469.3 166.7L474.3 173.3L480.2 180.0L486.0 175.0L491.0 183.3L497.7 196.7L502.7 200.8L509.3 203.3L516.0 213.3L521.0 220.0L526.0 223.7L531.0 220.0L536.0 220.0L544.3 219.2L552.7 218.3L559.3 215.0L564.3 210.0L569.3 201.7L574.3 194.2L579.3 189.7L583.8 188.0L585.0 183.3L591.7 180.0L598.3 178.7L606.7 179.2L611.7 185.0L615.8 191.7L620.0 196.7L625.0 205.8L630.0 211.7L634.2 214.2L638.3 210.0L643.3 198.3L646.7 190.0L651.7 175.0L653.3 171.7L660.0 155.0L666.7 140.8L671.7 136.7L676.7 133.0L680.8 134.2L684.2 143.3L686.7 155.0L689.2 163.3L693.3 167.5L698.3 171.7L703.3 185.0L708.3 198.3L713.3 210.0L718.3 218.3L721.7 222.0L727.8 220.8L729.0 221.3L733.5 225.3L736.9 226.4L742.6 224.2L747.1 217.4L751.6 211.7L756.2 208.9L760.7 210.0L765.2 217.4L770.9 220.8L775.4 222.5L780.0 224.7L782.2 229.8L784.5 241.2L787.3 249.1L790.1 252.5" stroke="#ff5a10"/>
</g>
<path d="M46 92.5H821" stroke="#ff1818" stroke-width="1.7"/>
<path d="M46 192.5H821" stroke="#c8c8c8" stroke-width="1"/>
<path d="M46 255.5H821" stroke="#14f014" stroke-width="1.7"/>
<path d="M46 306.5H821" stroke="#10e4f0" stroke-width="1.7"/>
<path d="M46 356.3H821" stroke="#14f014" stroke-width="1.7"/>
<path d="M46 419.5H821" stroke="#c8c8c8" stroke-width="1"/>
<rect x="46" y="441" width="832" height="4.8" fill="#464646" />
<rect x="46" y="534" width="832" height="4.5" fill="#464646" />
<rect x="455" y="442.2" width="14" height="0.9" fill="#b4b4b4" />
<rect x="455" y="443.8" width="14" height="0.9" fill="#b4b4b4" />
<rect x="455" y="535.2" width="14" height="0.9" fill="#b4b4b4" />
<rect x="455" y="536.8" width="14" height="0.9" fill="#b4b4b4" />
<rect x="47" y="557.4" width="14" height="2.45" fill="#868686" />
<rect x="47" y="557.4" width="14" height="0.7" fill="#a2a2a2" />
<rect x="47" y="559.85" width="29" height="2.45" fill="#868686" />
<rect x="47" y="559.85" width="29" height="0.7" fill="#a2a2a2" />
<rect x="47" y="562.3" width="43" height="2.45" fill="#868686" />
<rect x="47" y="562.3" width="43" height="0.7" fill="#a2a2a2" />
<rect x="47" y="564.75" width="43" height="2.45" fill="#868686" />
<rect x="47" y="564.75" width="43" height="0.7" fill="#a2a2a2" />
<rect x="47" y="567.2" width="71" height="2.45" fill="#868686" />
<rect x="47" y="567.2" width="71" height="0.7" fill="#a2a2a2" />
<rect x="47" y="569.65" width="71" height="2.45" fill="#868686" />
<rect x="47" y="569.65" width="71" height="0.7" fill="#a2a2a2" />
<rect x="47" y="572.1" width="71" height="2.45" fill="#868686" />
<rect x="47" y="572.1" width="71" height="0.7" fill="#a2a2a2" />
<rect x="47" y="574.55" width="58" height="2.45" fill="#868686" />
<rect x="47" y="574.55" width="58" height="0.7" fill="#a2a2a2" />
<rect x="47" y="577.0" width="58" height="2.45" fill="#868686" />
<rect x="47" y="577.0" width="58" height="0.7" fill="#a2a2a2" />
<rect x="47" y="579.45" width="58" height="2.45" fill="#868686" />
<rect x="47" y="579.45" width="58" height="0.7" fill="#a2a2a2" />
<rect x="47" y="581.9" width="58" height="2.45" fill="#868686" />
<rect x="47" y="581.9" width="58" height="0.7" fill="#a2a2a2" />
<rect x="47" y="584.35" width="58" height="2.45" fill="#868686" />
<rect x="47" y="584.35" width="58" height="0.7" fill="#a2a2a2" />
<rect x="47" y="586.8" width="58" height="2.45" fill="#868686" />
<rect x="47" y="586.8" width="58" height="0.7" fill="#a2a2a2" />
<rect x="47" y="589.25" width="43" height="2.45" fill="#868686" />
<rect x="47" y="589.25" width="43" height="0.7" fill="#a2a2a2" />
<rect x="47" y="591.7" width="14" height="2.45" fill="#868686" />
<rect x="47" y="591.7" width="14" height="0.7" fill="#a2a2a2" />
<rect x="47" y="565.0" width="86" height="1.0" fill="#929292" />
<rect x="47" y="574.3" width="121" height="1.0" fill="#929292" />
<rect x="47" y="576.8" width="188" height="1.0" fill="#929292" />
<rect x="47" y="579.7" width="203" height="1.0" fill="#929292" />
<rect x="47" y="582.7" width="116" height="1.0" fill="#929292" />
<rect x="47" y="585.2" width="86" height="1.0" fill="#929292" />
<rect x="47" y="591.7" width="14" height="1.8" fill="#4c8a4c" />
<g stroke="#fff" stroke-opacity="0.55" stroke-width="1" stroke-dasharray="2 2" shape-rendering="crispEdges"><path d="M46 580.5H260"/></g>
<path d="M46 566.5L46.4 566.5L51.5 562.5L59.0 562.5L65.0 561.0L69.5 564.6L72.5 562.5L77.0 566.4L89.0 566.5L93.5 565.5L101.0 562.5L108.5 558.0L113.0 566.5L120.5 566.5L124.4 566.5L125 566.5z" fill="#8a5c5c"/>
<path d="M46 566.5H821" stroke="#ff1818" stroke-width="1.3" shape-rendering="crispEdges"/>
<path d="M46 593.5H821" stroke="#18c818" stroke-width="1.3" shape-rendering="crispEdges"/>
<path d="M46.4 570.0L51.5 562.5L59.0 562.5L65.0 561.0L69.5 564.6L72.5 562.5L77.0 566.4L89.0 567.0L93.5 565.5L101.0 562.5L108.5 558.0L113.0 567.0L120.5 569.1L124.4 567.0L129.5 566.4L137.0 574.5L143.0 578.1L148.9 578.1L157.9 576.6L162.4 579.0L165.4 585.6L169.9 579.0L175.9 576.0L180.4 572.4L186.4 570.6L190.9 573.0L195.4 577.5L202.9 579.6L207.4 580.5L211.3 574.5L214.9 580.5L220.9 580.5L226.9 581.4L232.9 584.4L235.9 588.0L240.4 582.0L246.4 576.6L253.9 575.4L262.9 576.6L268.9 576.6L271.9 579.0L276.4 573.6L280.9 572.4L285.4 576.6L292.9 574.5L298.9 576.6L304.9 571.5L310.0 567.0L312.0 564.0L316.5 565.5L325.5 562.5L329.4 570.0L334.5 567.0L337.5 567.9L342.0 572.1L346.5 572.1L351.0 570.6L354.6 572.4L357.6 570.0L361.5 572.4L366.0 571.8L369.6 575.4L373.5 573.9L378.0 573.0L382.5 575.4L388.5 576.6L394.5 578.1L399.0 582.9L402.6 584.4L407.3 581.1L410.9 581.1L414.5 582.9L418.4 580.5L423.5 576.6L430.4 576.9L434.9 573.6L439.4 572.4L443.9 570.6L447.5 567.0L452.0 577.5L455.9 578.4L463.4 578.1L467.9 580.5L472.4 585.0L476.9 584.1L479.9 586.5L483.8 578.1L488.9 582.0L493.4 585.0L497.0 587.4L500.9 585.0L503.9 583.5L507.5 583.5L512.9 588.0L517.4 586.5L520.4 585.9L524.0 586.5L528.5 582.0L532.4 580.5L536.9 583.5L540.5 581.1L545.0 583.5L549.5 581.1L553.4 579.9L557.9 580.5L562.4 576.6L566.9 575.4L569.9 573.0L571.6 573.6L575.5 574.5L581.5 575.1L586.0 573.0L589.6 575.4L593.5 571.5L598.0 576.6L602.5 576.0L606.4 576.6L611.5 582.0L615.1 583.5L618.4 580.5L622.9 587.1L631.0 587.1L635.5 583.5L639.4 577.5L643.0 576.9L647.5 571.5L653.5 567.9L659.5 567.6L664.0 567.0L668.4 564.9L671.4 570.0L675.3 569.4L679.5 573.0L684.9 582.9L687.9 586.5L692.4 580.5L696.3 579.6L701.4 582.9L707.4 586.5L711.9 588.9L716.4 588.9L720.9 585.6L724.5 583.5L728.4 583.5L732.9 587.1L737.4 583.5L741.9 581.4L746.4 580.5L752.4 576.9L756.9 578.4L761.4 581.4L765.9 585.9L770.4 582.9L774.9 582.0L778.8 582.9L782.4 586.5L786.0 591.6L789.9 587.1" stroke="#f0f0f0" stroke-width="1.2" fill="none" stroke-linejoin="round"/>
<path d="M821.3 58V622.5" stroke="#fff" stroke-width="1.6"/>
<path d="M46 622.4H822" stroke="#fff" stroke-width="1.4"/>
<path d="M146.5 622V626" stroke="#fff" stroke-width="1"/>
<path d="M268.5 622V626" stroke="#fff" stroke-width="1"/>
<path d="M395.5 622V626" stroke="#fff" stroke-width="1"/>
<path d="M521.5 622V626" stroke="#fff" stroke-width="1"/>
<path d="M643.5 622V626" stroke="#fff" stroke-width="1"/>
<path d="M770.5 622V626" stroke="#fff" stroke-width="1"/>
<path d="M822 428.9L829.5 432.5L822 436.1z" fill="#fff"/>
<text x="831" y="437.3" font-size="13" fill="#fff" textLength="34" lengthAdjust="spacingAndGlyphs" stroke="#fff" stroke-width="0.3">85000</text>
<path d="M822 387.9L829.5 391.5L822 395.1z" fill="#fff"/>
<text x="831" y="396.3" font-size="13" fill="#fff" textLength="34" lengthAdjust="spacingAndGlyphs" stroke="#fff" stroke-width="0.3">90000</text>
<path d="M822 346.9L829.5 350.5L822 354.1z" fill="#fff"/>
<text x="831" y="355.3" font-size="13" fill="#fff" textLength="34" lengthAdjust="spacingAndGlyphs" stroke="#fff" stroke-width="0.3">95000</text>
<path d="M822 305.9L829.5 309.5L822 313.1z" fill="#fff"/>
<text x="831" y="314.3" font-size="13" fill="#fff" textLength="26.5" lengthAdjust="spacingAndGlyphs" stroke="#fff" stroke-width="0.3">0.1M</text>
<path d="M822 263.9L829.5 267.5L822 271.1z" fill="#fff"/>
<text x="831" y="272.3" font-size="13" fill="#fff" textLength="40.6" lengthAdjust="spacingAndGlyphs" stroke="#fff" stroke-width="0.3">0.105M</text>
<path d="M822 222.9L829.5 226.5L822 230.1z" fill="#fff"/>
<text x="831" y="231.3" font-size="13" fill="#fff" textLength="33.5" lengthAdjust="spacingAndGlyphs" stroke="#fff" stroke-width="0.3">0.11M</text>
<path d="M822 181.9L829.5 185.5L822 189.1z" fill="#fff"/>
<text x="831" y="190.3" font-size="13" fill="#fff" textLength="40.6" lengthAdjust="spacingAndGlyphs" stroke="#fff" stroke-width="0.3">0.115M</text>
<path d="M822 140.9L829.5 144.5L822 148.1z" fill="#fff"/>
<text x="831" y="149.3" font-size="13" fill="#fff" textLength="33.5" lengthAdjust="spacingAndGlyphs" stroke="#fff" stroke-width="0.3">0.12M</text>
<path d="M822 98.9L829.5 102.5L822 106.1z" fill="#fff"/>
<text x="831" y="107.3" font-size="13" fill="#fff" textLength="40.6" lengthAdjust="spacingAndGlyphs" stroke="#fff" stroke-width="0.3">0.125M</text>
<path d="M822 57.9L829.5 61.5L822 65.1z" fill="#fff"/>
<text x="831" y="72.2" font-size="13" fill="#fff" textLength="33.5" lengthAdjust="spacingAndGlyphs" stroke="#fff" stroke-width="0.3">0.13M</text>
<path d="M822 412.5H826.5" stroke="#fff" stroke-width="1.2"/>
<path d="M822 371.5H826.5" stroke="#fff" stroke-width="1.2"/>
<path d="M822 330.5H826.5" stroke="#fff" stroke-width="1.2"/>
<path d="M822 288.5H826.5" stroke="#fff" stroke-width="1.2"/>
<path d="M822 247.5H826.5" stroke="#fff" stroke-width="1.2"/>
<path d="M822 206.5H826.5" stroke="#fff" stroke-width="1.2"/>
<path d="M822 165.5H826.5" stroke="#fff" stroke-width="1.2"/>
<path d="M822 123.5H826.5" stroke="#fff" stroke-width="1.2"/>
<path d="M822 82.5H826.5" stroke="#fff" stroke-width="1.2"/>
<path d="M822 542.7L829.5 546.3L822 549.9z" fill="#fff"/>
<text x="831" y="551.1" font-size="13" fill="#fff" textLength="21" lengthAdjust="spacingAndGlyphs" stroke="#fff" stroke-width="0.3">100</text>
<path d="M822 576.4L829.5 580.0L822 583.6z" fill="#fff"/>
<text x="831" y="584.8" font-size="13" fill="#fff" textLength="14" lengthAdjust="spacingAndGlyphs" stroke="#fff" stroke-width="0.3">50</text>
<path d="M822 610.0L829.5 613.6L822 617.2z" fill="#fff"/>
<text x="831" y="618.4" font-size="13" fill="#fff" textLength="7" lengthAdjust="spacingAndGlyphs" stroke="#fff" stroke-width="0.3">0</text>
<path d="M822 563.5H826.5" stroke="#fff" stroke-width="1.2"/>
<path d="M822 597.5H826.5" stroke="#fff" stroke-width="1.2"/>
<path d="M823.3 195.0L828.6 187.0H878V203.0H828.6z" fill="#ff3d9a"/>
<path d="M823.3 235.5L828.6 227.5H878V243.5H828.6z" fill="#c070f0"/>
<text x="830.3" y="240.3" font-size="13.5" fill="#fff" textLength="40.5" lengthAdjust="spacingAndGlyphs" stroke="#fff" stroke-width="0.3">0.109M</text>
<path d="M823.3 200.5L828.6 192.5H878V208.5H828.6z" fill="#ff2b4e"/>
<text x="830.3" y="205.3" font-size="13.5" fill="#fff" textLength="40.5" lengthAdjust="spacingAndGlyphs" stroke="#fff" stroke-width="0.3">0.113M</text>
<path d="M823.3 226.5L828.6 218.0H878V235.0H828.6z" fill="#fff23a"/>
<text x="830.3" y="231.3" font-size="13.5" fill="#000" textLength="40.5" lengthAdjust="spacingAndGlyphs" stroke="#000" stroke-width="0.3">0.110M</text>
<path d="M823.3 253.0L828.6 244.5H878V261.5H828.6z" fill="#ff5a0a"/>
<text x="830.3" y="257.8" font-size="13.5" fill="#000" textLength="40.5" lengthAdjust="spacingAndGlyphs" stroke="#000" stroke-width="0.3">0.107M</text>
<path d="M823.3 279.3L828.6 271.1H878V287.6H828.6z" fill="#fff"/>
<text x="830.3" y="284.1" font-size="13.5" fill="#000" textLength="40.5" lengthAdjust="spacingAndGlyphs" stroke="#000" stroke-width="0.3">0.104M</text>
<path d="M823.5 588.4L829 580H877.5V597H829z" fill="#fff"/>
<text x="831" y="593.2" font-size="13" fill="#000" textLength="45" lengthAdjust="spacingAndGlyphs" stroke="#000" stroke-width="0.3">38.8472</text>
<text x="82.5" y="637" font-size="12.5" fill="#fff" text-anchor="middle" textLength="22.6" lengthAdjust="spacingAndGlyphs" stroke="#fff" stroke-width="0.3">May</text>
<text x="207" y="637" font-size="12.5" fill="#fff" text-anchor="middle" textLength="20" lengthAdjust="spacingAndGlyphs" stroke="#fff" stroke-width="0.3">Jun</text>
<text x="331.5" y="637" font-size="12.5" fill="#fff" text-anchor="middle" textLength="16" lengthAdjust="spacingAndGlyphs" stroke="#fff" stroke-width="0.3">Jul</text>
<text x="457.5" y="637" font-size="12.5" fill="#fff" text-anchor="middle" textLength="20.5" lengthAdjust="spacingAndGlyphs" stroke="#fff" stroke-width="0.3">Aug</text>
<text x="582.5" y="637" font-size="12.5" fill="#fff" text-anchor="middle" textLength="21" lengthAdjust="spacingAndGlyphs" stroke="#fff" stroke-width="0.3">Sep</text>
<text x="706.5" y="637" font-size="12.5" fill="#fff" text-anchor="middle" textLength="19.6" lengthAdjust="spacingAndGlyphs" stroke="#fff" stroke-width="0.3">Oct</text>
<text x="807.5" y="637" font-size="12.5" fill="#fff" text-anchor="middle" textLength="21.2" lengthAdjust="spacingAndGlyphs" stroke="#fff" stroke-width="0.3">Nov</text>
<text x="434" y="653" font-size="12.5" fill="#fff" text-anchor="middle" textLength="28" lengthAdjust="spacingAndGlyphs" stroke="#fff" stroke-width="0.3">2025</text>
<text x="778" y="117" font-size="11.5" fill="#fff" textLength="28" lengthAdjust="spacingAndGlyphs" stroke="#fff" stroke-width="0.3">Broke</text>
<rect x="4" y="58" width="17.5" height="50" fill="#000" />
<defs><linearGradient id="lg" x1="0" x2="1" y1="0" y2="0"><stop offset="0" stop-color="#3a3a3a"/><stop offset="0.5" stop-color="#2c2c2c"/><stop offset="1" stop-color="#1c1c1c"/></linearGradient><linearGradient id="bg" x1="0" x2="0" y1="0" y2="1"><stop offset="0" stop-color="#343434"/><stop offset="1" stop-color="#262626"/></linearGradient></defs>
<rect x="5" y="110" width="16.5" height="191" fill="url(#lg)" />
<path d="M6.5 63h10.5l-5.25 5.5z" fill="#b8b8b8"/>
<rect x="4" y="107.9" width="17.5" height="1.6" fill="#f0f0f0" />
<rect x="4" y="301.59999999999997" width="17.5" height="1.6" fill="#f0f0f0" />
<rect x="4" y="399.3" width="17.5" height="1.6" fill="#f0f0f0" />
<rect x="4" y="497.2" width="17.5" height="1.6" fill="#f0f0f0" />
<rect x="4" y="595.4000000000001" width="17.5" height="1.6" fill="#f0f0f0" />
<text transform="translate(17.2 197.5) rotate(-90)" font-size="13.5" fill="#fff" text-anchor="middle" textLength="55" lengthAdjust="spacingAndGlyphs">Favorites</text>
<text transform="translate(17.2 351.5) rotate(-90)" font-size="13.5" fill="#fff" text-anchor="middle" textLength="22.5" lengthAdjust="spacingAndGlyphs">Edit</text>
<text transform="translate(17.2 448) rotate(-90)" font-size="13.5" fill="#fff" text-anchor="middle" textLength="29" lengthAdjust="spacingAndGlyphs">Style</text>
<text transform="translate(17.2 547.7) rotate(-90)" font-size="13.5" fill="#fff" text-anchor="middle" textLength="36" lengthAdjust="spacingAndGlyphs">Modes</text>
<path d="M9 229.5l1.6-1.6 6.6 6.6-1.6 1.6z" fill="#e8e8e8"/><path d="M16 236.6l1.3-1.3.7 2z" fill="#e8e8e8"/>
<rect x="22" y="59.7" width="23.5" height="22.3" fill="#2b5a8c" />
<rect x="22" y="84.0" width="23.5" height="22.3" fill="url(#bg)" />
<rect x="22" y="108.2" width="23.5" height="22.3" fill="url(#bg)" />
<rect x="22" y="132.4" width="23.5" height="22.3" fill="url(#bg)" />
<rect x="22" y="156.7" width="23.5" height="22.3" fill="url(#bg)" />
<rect x="22" y="180.9" width="23.5" height="22.3" fill="url(#bg)" />
<rect x="22" y="205.2" width="23.5" height="22.3" fill="url(#bg)" />
<rect x="22" y="229.4" width="23.5" height="22.3" fill="url(#bg)" />
<rect x="22" y="253.7" width="23.5" height="22.3" fill="url(#bg)" />
<rect x="22" y="277.9" width="23.5" height="22.3" fill="url(#bg)" />
<rect x="22" y="303.8" width="23.5" height="22.3" fill="url(#bg)" />
<rect x="22" y="327.9" width="23.5" height="22.3" fill="url(#bg)" />
<rect x="22" y="352.0" width="23.5" height="22.3" fill="url(#bg)" />
<rect x="22" y="376.1" width="23.5" height="22.3" fill="url(#bg)" />
<rect x="22" y="401.9" width="23.5" height="22.3" fill="url(#bg)" />
<rect x="22" y="426" width="23.5" height="22.3" fill="url(#bg)" />
<rect x="22" y="449.8" width="23.5" height="22.3" fill="url(#bg)" />
<rect x="22" y="473.9" width="23.5" height="22.3" fill="url(#bg)" />
<rect x="22" y="499.6" width="23.5" height="22.3" fill="url(#bg)" />
<rect x="22" y="523.7" width="23.5" height="22.3" fill="url(#bg)" />
<rect x="22" y="548.1" width="23.5" height="22.3" fill="#2b5a8c" />
<rect x="22" y="572.1" width="23.5" height="22.3" fill="#2b5a8c" />
<rect x="22" y="597.6" width="23.5" height="22.3" fill="url(#bg)" />
<path transform="translate(28.2 65.9) rotate(-22) scale(1.08)" d="M0 0L0 13.2L3.2 10.3L5.6 15.6L8 14.5L5.7 9.3L10 9.2z" fill="#fff"/>
<path transform="translate(27 90.0)" d="M1.5 7.5L8 1l2 2-6.5 6.5-2.6.7z" fill="#f0f0f0"/><path d="M33 100.0h5" stroke="#f0f0f0" stroke-width="1.4"/>
<path d="M38.2 102.8h6.2l-3.1 3z" fill="#e8e8e8"/>
<rect x="26.5" y="116.6" width="13.4" height="8.2" fill="#a6a6a6" stroke="#f4f4f4" stroke-width="1.1"/>
<g stroke="#f4f4f4" stroke-width="1.4" fill="none"><path d="M26.5 136.9h7M26.5 150.9h7M30 136.9v9"/></g><path d="M27 144.4h6l-3 4.2z" fill="#f4f4f4"/>
<text x="34.3" y="149.4" font-size="13" fill="#fff" textLength="6.5" lengthAdjust="spacingAndGlyphs" font-weight="bold" stroke="#fff" stroke-width="0.3">$</text>
<rect x="25" y="160.0" width="16" height="16.5" fill="#c9c9ff" />
<text x="33" y="174.2" font-size="17" font-weight="bold" fill="#fff" stroke="#444" stroke-width="0.8" paint-order="stroke" text-anchor="middle" style="font-family:'Liberation Serif',serif">T</text>
<rect x="26" y="191.4" width="14.3" height="2.4" fill="#f4f4f4" />
<path d="M27.5 222.2Q30 213.2 40 210.7" stroke="#f4f4f4" stroke-width="2" fill="none" stroke-linecap="round"/>
<path d="M28.5 245.4L37.5 236.2" stroke="#f4f4f4" stroke-width="1.8"/><circle cx="28.5" cy="245.4" r="2.5" fill="#f4f4f4"/><circle cx="37.5" cy="236.2" r="2.5" fill="#f4f4f4"/>
<circle cx="33" cy="265.0" r="6.8" fill="#8f8f8f" stroke="#f4f4f4" stroke-width="1.2"/>
<text x="25.3" y="295.8" font-size="16.5" fill="#fff" textLength="10.8" lengthAdjust="spacingAndGlyphs" font-weight="bold" stroke="#fff" stroke-width="0.3">R</text>
<g stroke="#e8e8e8" stroke-width="1"><path d="M37.5 283.9h3.5M38.5 286.9h2.5M38.5 289.9h2.5M37.5 295.4h3.5" stroke-dasharray="none"/></g>
<path transform="translate(27.5 307.8)" d="M0 12.3L1.2 8.6 9 .8l2.5 2.5-7.8 7.8z" fill="#f0f0f0"/><path transform="translate(27.5 307.8)" d="M9.8 0l.9-.9 2.5 2.5-.9.9z" fill="#bbb"/>
<path d="M38.2 322.6h6.2l-3.1 3z" fill="#e8e8e8"/>
<g stroke="#f4f4f4" stroke-width="1.5" fill="none"><path d="M33.2 333.2V345.2M27 339.2H39.5"/></g><path d="M33.2 331.2l2.8 3.2h-5.6zM33.2 347.2l2.8-3.2h-5.6zM25.2 339.2l3.2-2.8v5.6zM41.2 339.2l-3.2-2.8v5.6z" fill="#f4f4f4"/>
<path transform="translate(27.5 356.5)" d="M0 0L0 12.5L3 9.8L5.2 14.6L7.5 13.6L5.4 8.8L9.4 8.7z" fill="#fff"/><path d="M36.5 358.5h4.6M38.8 356.2v4.6" stroke="#fff" stroke-width="1.2"/>
<path d="M28.3 384.6h9.6l-.8 10.3h-8z" fill="#f4f4f4"/><rect x="27.3" y="381.4" width="11.6" height="2.2" fill="#f4f4f4"/><rect x="31" y="379.7" width="4.2" height="2" fill="#f4f4f4"/>
<text x="33" y="419.9" font-size="18" font-style="italic" fill="#fff" text-anchor="middle" style="font-family:'Liberation Serif',serif">A</text>
<path d="M38.2 420.7h6.2l-3.1 3z" fill="#e8e8e8"/>
<rect x="25.5" y="429.2" width="14" height="13.6" fill="#ff0000" stroke="#333" stroke-width="0.6"/>
<path d="M38.2 444.8h6.2l-3.1 3z" fill="#e8e8e8"/>
<rect x="26" y="454.8" width="14" height="1.2" fill="#f4f4f4" />
<rect x="26" y="458.6" width="14" height="2" fill="#f4f4f4" />
<rect x="26" y="462.8" width="14" height="4" fill="#f4f4f4" />
<path d="M38.2 468.6h6.2l-3.1 3z" fill="#e8e8e8"/>
<g stroke="#f4f4f4" stroke-width="1.1"><path d="M26 479.9h14"/><path d="M26 483.9h14" stroke-dasharray="1.2 1.2"/><path d="M26 487.9h14" stroke-dasharray="3 1.5"/></g>
<path d="M38.2 492.7h6.2l-3.1 3z" fill="#e8e8e8"/>
<rect x="-8" y="-3" width="16" height="6" rx="3" transform="translate(33 510.9) rotate(-42)" fill="none" stroke="#b8b8b8" stroke-width="1.3" stroke-dasharray="1.7 1"/>
<rect x="27" y="530.2" width="5.5" height="4.2" fill="#f4f4f4"/><path d="M28 530.2v-1.3a1.7 1.7 0 0 1 3.4 0v1.3" stroke="#f4f4f4" stroke-width="1" fill="none"/><path d="M34.3 530.7v12M28.5 536.7h11.5" stroke="#f4f4f4" stroke-width="1.2"/><circle cx="34.3" cy="536.7" r="1.8" fill="#2a2a2a" stroke="#f4f4f4" stroke-width="0.9"/>
<path d="M38.2 554.9h-4.2a5 5 0 0 0 0 10h4.2" fill="none" stroke="#f0f0f0" stroke-width="3.9"/><path d="M38.4 554.9h-4.4a5 5 0 0 0 0 10h4.4" fill="none" stroke="#2b5a8c" stroke-width="1.5"/>
<circle cx="34.3" cy="580.1" r="3.1" fill="#1e8cff"/><circle cx="30.7" cy="586.4" r="3.3" fill="#10d020"/><circle cx="37" cy="586.4" r="3.3" fill="#f01010"/>
<g transform="translate(33 608.8) scale(0.92)"><circle r="4.3" fill="none" stroke="#f4f4f4" stroke-width="3"/><g stroke="#f4f4f4" stroke-width="2.6"><path d="M0-7.4V-5M0 7.4V5M-7.4 0H-5M7.4 0H5M-5.2-5.2L-3.5-3.5M5.2 5.2L3.5 3.5M-5.2 5.2L-3.5 3.5M5.2-5.2L3.5-3.5"/></g></g>
<path d="M38.2 616.4h6.2l-3.1 3z" fill="#e8e8e8"/>
</svg>
</body></html>
